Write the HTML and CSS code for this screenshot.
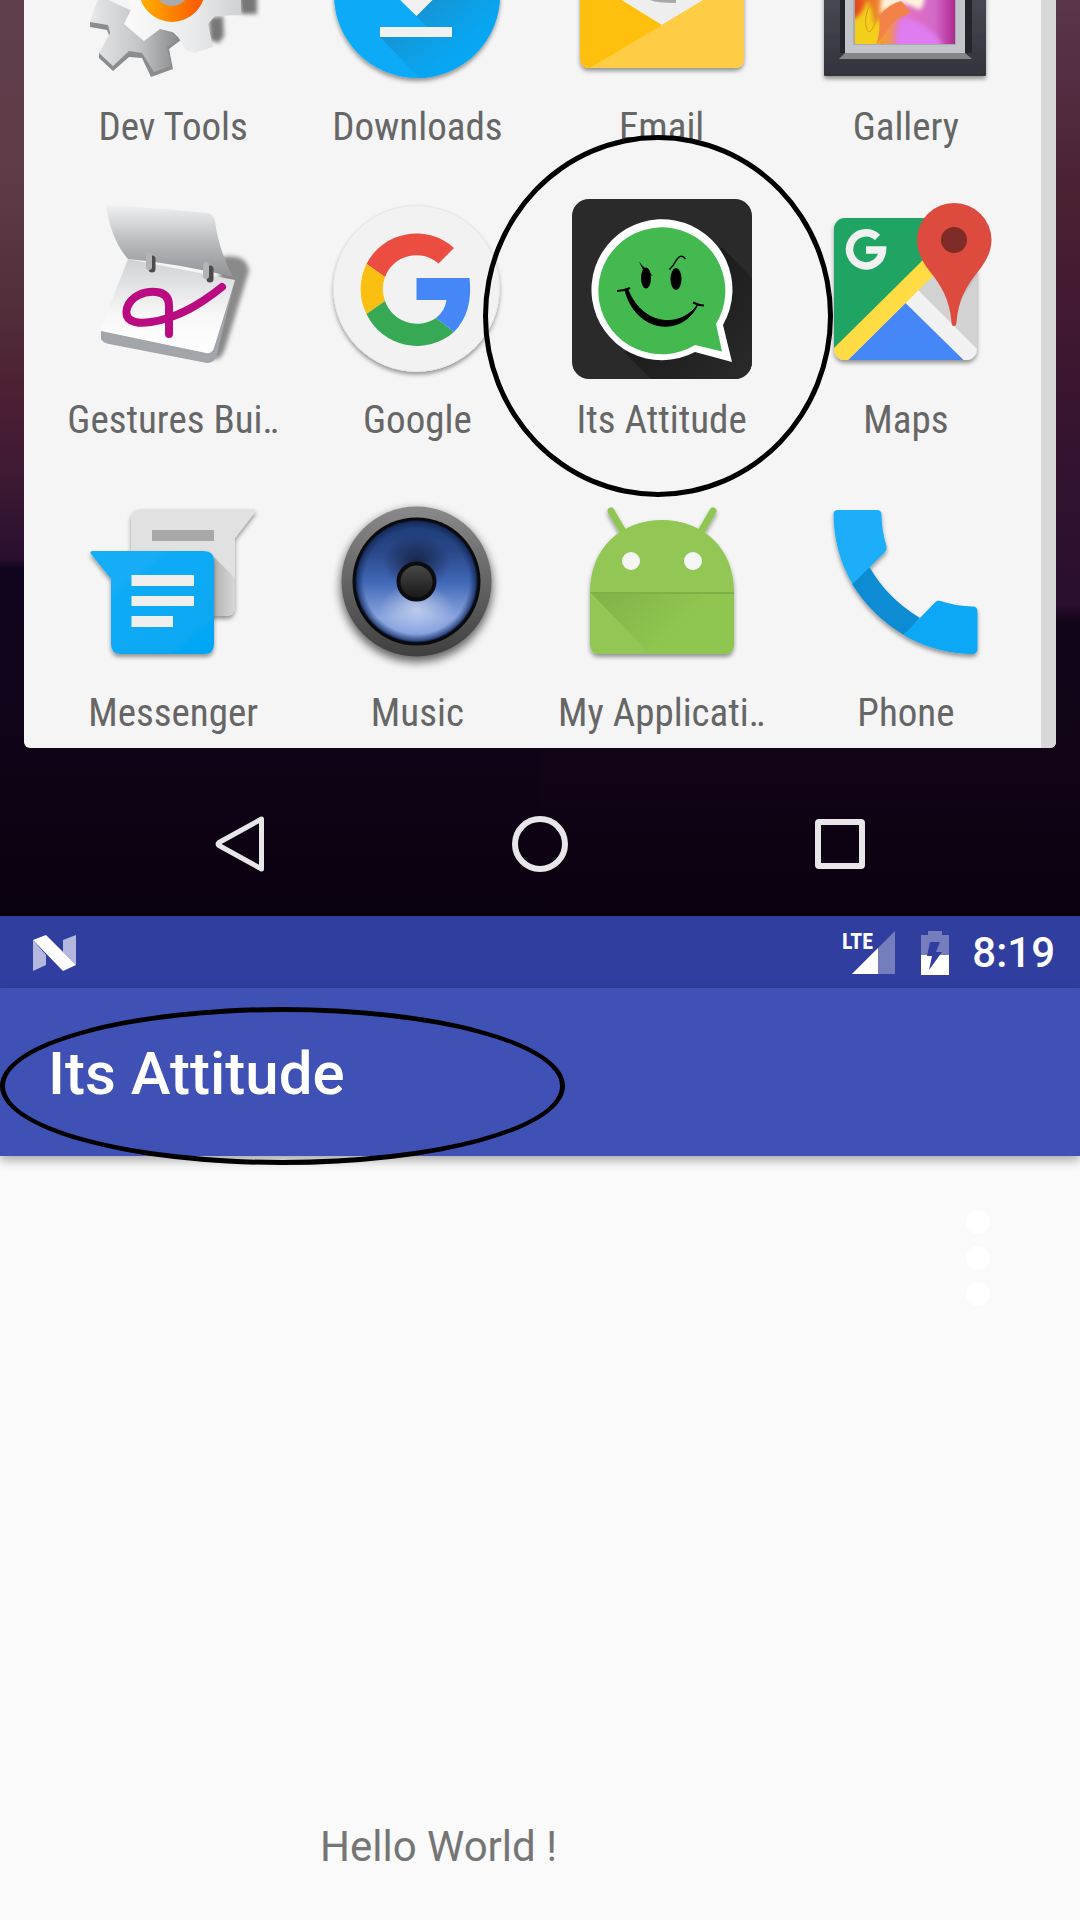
FILE: index.html
```html
<!DOCTYPE html>
<html lang="en">
<head>
<meta charset="utf-8">
<meta name="viewport" content="width=device-width, initial-scale=1">
<title>Its Attitude</title>
<link rel="stylesheet" href="styles.css">
</head>
<body>
<section class="launcher">
  <div class="drawer">
    <ul class="apps">
      <li class="app"><button class="app-button" type="button">
        <svg class="app-icon cut" viewBox="0 0 180 86" aria-hidden="true">
          <defs>
            <linearGradient id="gearBack" x1="0" y1="0" x2="1" y2="0"><stop offset="0" stop-color="#e6e8ea"/><stop offset=".55" stop-color="#c4c5c7"/><stop offset="1" stop-color="#88898b"/></linearGradient>
            <linearGradient id="gearFront" x1="0" y1="0" x2="1" y2="0"><stop offset="0" stop-color="#fbfbfb"/><stop offset=".6" stop-color="#e8eaeb"/><stop offset="1" stop-color="#cfd1d3"/></linearGradient>
            <linearGradient id="gearRing" x1="0" y1="0" x2="1" y2="0"><stop offset="0" stop-color="#ffa800"/><stop offset="1" stop-color="#fb5e00"/></linearGradient>
            <filter id="soft" x="-30%" y="-30%" width="160%" height="160%"><feGaussianBlur stdDeviation="2"/></filter>
            <filter id="drop" x="-20%" y="-20%" width="140%" height="150%"><feDropShadow dx="0" dy="3" stdDeviation="2" flood-opacity=".4"/></filter>
          </defs>
          <path d="M156-4h18v18h-16zM126 18l14-2 1 20-5 7-9-3z" fill="#777" filter="url(#soft)"/>
          <path d="M7 22v5l17 3 3 8-11 15v5l14 13 16-14 13 1 9 19 22-8-4-20 12-9-12-12-50-20z" fill="#8b8c8e"/>
          <path d="M17-4L12 7 7 22l18 3 2 8-11 20 14 13 16-15 13 2 12 19 17-6-4-19 12-8-9-9-10-6z" fill="url(#gearBack)"/>
          <path d="M45-4l4 12-8 16 20 17 16-12 16 4 10 17 8 3 19-6-5-23 7-8 26-1V-4z" fill="url(#gearFront)"/>
          <circle cx="89" cy="-11" r="25" fill="#a9abad"/>
          <circle cx="89" cy="-11" r="25" fill="none" stroke="url(#gearRing)" stroke-width="16"/>
        </svg><span class="app-name">Dev Tools</span></button></li>
      <li class="app"><button class="app-button" type="button">
        <svg class="app-icon cut" viewBox="0 0 180 86" aria-hidden="true">
          <defs>
            <linearGradient id="blue" x1="0" y1="0" x2="1" y2="1"><stop offset="0" stop-color="#18aef8"/><stop offset="1" stop-color="#03a6f3"/></linearGradient>
            <linearGradient id="dlShade" gradientUnits="userSpaceOnUse" x1="70" y1="24" x2="110" y2="74"><stop offset="0" stop-color="#1594d3"/><stop offset=".5" stop-color="#0d9fe5"/><stop offset="1" stop-color="#07a7f4"/></linearGradient>
            <clipPath id="dlClip"><circle cx="90" cy="-5" r="83"/></clipPath>
          </defs>
          <circle cx="90" cy="-5" r="83" fill="#10abf7" filter="url(#drop)"/>
          <path d="M53 37L98 84l90-20V-4h-82L89 16l11 11z" fill="url(#dlShade)" clip-path="url(#dlClip)"/>
          <path d="M69-4L89.500 16l20-20zM53 27h72v10H53z" fill="#f1f1f1"/>
        </svg><span class="app-name">Downloads</span></button></li>
      <li class="app"><button class="app-button" type="button">
        <svg class="app-icon cut" viewBox="0 0 180 86" aria-hidden="true">
          <path d="M8-10h164v68q0 10-10 10H18Q8 68 8 58z" fill="#ffc010" filter="url(#drop)"/>
          <path d="M43-4l47 29 48-29z" fill="#eee"/>
          <path d="M78 0q6 3 26 3V0z" fill="#a8a8a8"/>
          <path d="M18 68L90 25l48-29h34v62q0 10-10 10z" fill="#ffcd45"/>
        </svg><span class="app-name">Email</span></button></li>
      <li class="app"><button class="app-button" type="button">
        <svg class="app-icon cut" viewBox="0 0 180 86" aria-hidden="true">
          <defs>
            <linearGradient id="photo" x1="0" y1="0" x2="1" y2="0"><stop offset="0" stop-color="#e5451c"/><stop offset=".3" stop-color="#f39a3a"/><stop offset=".5" stop-color="#e474c4"/><stop offset=".8" stop-color="#d368c8"/><stop offset="1" stop-color="#ae2a90"/></linearGradient>
            <linearGradient id="frame" x1="0" y1="0" x2="0" y2="1"><stop offset="0" stop-color="#4a4a55"/><stop offset="1" stop-color="#33333c"/></linearGradient>
            <clipPath id="photoClip"><path d="M39-4h100v48H39z"/></clipPath>
          </defs>
          <rect x="8" y="-10" width="162" height="86" rx="1" fill="url(#frame)" filter="url(#drop)"/>
          <path d="M24-4h132v57H24z" fill="#25252c"/>
          <path d="M29 53h120l7 6H23z" fill="#85868a"/>
          <path d="M29-4h120v57H29z" fill="#c3c3ca"/>
          <path d="M37-4h103v49H37z" fill="#a9a9b2"/>
          <path d="M39-4h100v48H39z" fill="url(#photo)"/>
          <g clip-path="url(#photoClip)">
            <g filter="url(#soft)">
              <path d="M35 50V20q12-4 16-20 8 12 6 24l8-6q4 16-6 32z" fill="#f3cf1a"/>
              <path d="M80 50q-2-28 8-32 30 6 40 32z" fill="#df7cef"/>
              <path d="M66-4h42q2 6-4 14Q92 4 86 3 72 6 64 14z" fill="#fff3df"/>
            </g>
            <path d="M63 16q10-12 22-15 6 6 10 12-14 4-20 12-6 10-14 19 4-16 2-28z" fill="#f28248"/>
            <path d="M54 4q10 10 4 22t-8 0q-2-8 4-22z" fill="none" stroke="#d99a10" stroke-width="1"/>
          </g>
        </svg><span class="app-name">Gallery</span></button></li>

      <li class="app"><button class="app-button" type="button">
        <svg class="app-icon" viewBox="0 0 180 180" aria-hidden="true">
          <defs>
            <linearGradient id="lid" x1="0" y1="0" x2="0" y2="1"><stop offset="0" stop-color="#eff1f1"/><stop offset=".55" stop-color="#b5b7ba"/><stop offset="1" stop-color="#929396"/></linearGradient>
            <linearGradient id="pad" x1="0" y1="0" x2="0" y2="1"><stop offset="0" stop-color="#cfd1d3"/><stop offset=".6" stop-color="#f8f8f8"/><stop offset="1" stop-color="#fff"/></linearGradient>
          </defs>
          <path d="M138 58q26-4 28 14l-24 78q-4 12-12 10z" fill="#6f6f6f" opacity=".8" filter="url(#soft)"/>
          <path d="M18 131v9q2 4 8 5l98 19q6 0 9-5l19-78z" fill="#a2a5a9"/>
          <path d="M45 60l107 21-21 68q-2 6-8 5l-105-22q0-5 3-11z" fill="url(#pad)"/>
          <path d="M23 6q50 3 102 8 5 1 7 8 4 30 18 56Q98 65 45 60 28 41 23 6z" fill="url(#lid)"/>
          <path d="M69 60v10M127 70v10" stroke="#4b4b4b" stroke-width="7" stroke-linecap="round"/>
          <path d="M66 56v12M123 66v11" stroke="#b4b4b4" stroke-width="6" stroke-linecap="round"/>
          <path d="M139 88C119 104 96 119 68 123 49 126 41 120 44 109 48 97 61 92 73 93q13 1 13 14v28" fill="none" stroke="#ba0b81" stroke-width="8" stroke-linecap="round" stroke-linejoin="round"/>
        </svg><span class="app-name">Gestures Bui‥</span></button></li>
      <li class="app"><button class="app-button" type="button">
        <svg class="app-icon" viewBox="0 0 180 180" aria-hidden="true">
          <circle cx="89.500" cy="89.500" r="83" fill="#f2f2f2" filter="url(#drop)"/>
          <circle cx="89.500" cy="89.500" r="83" fill="#f2f2f2" stroke="#e6e6e6" stroke-width="1"/>
          <path d="M39.500 65A56 56 0 0 1 127 49l-15.500 15.500A33.500 33.500 0 0 0 58 78z" fill="#eb4d40"/>
          <path d="M39.500 65a56 56 0 0 0 0 50L58 102a34 34 0 0 1 0-24z" fill="#fbbf12"/>
          <path d="M39.500 115A56 56 0 0 0 127 133l-18-14A34 34 0 0 1 58 102z" fill="#37a955"/>
          <path d="M89.500 79h53q4 34-15.500 54l-18-14q9-7 10.500-18h-30z" fill="#4587f6"/>
        </svg><span class="app-name">Google</span></button></li>
      <li class="app marked"><button class="app-button" type="button">
        <svg class="app-icon" viewBox="0 0 180 180" aria-hidden="true">
          <defs>
            <linearGradient id="longShade" x1="0" y1="0" x2="1" y2="1"><stop offset=".3" stop-color="#1a1a1a"/><stop offset="1" stop-color="#2a2a2a"/></linearGradient>
            <clipPath id="tile"><rect width="180" height="180" rx="17"/></clipPath>
          </defs>
          <rect width="180" height="180" rx="17" fill="#2a2a2a"/>
          <path d="M150 48l30 31v101H79l-26-26z" fill="url(#longShade)" clip-path="url(#tile)"/>
          <path d="M160 163l-37-10A70.500 70.500 0 1 1 151 126z" fill="#fff"/>
          <path d="M150 152.500L123 146A63.500 63.500 0 1 1 144 125z" fill="#44b94f"/>
          <ellipse cx="74" cy="79" rx="5" ry="10.500"/><ellipse cx="104" cy="80" rx="5.500" ry="11"/>
          <path d="M67 62.500q4 5 6 6.500l8 8-9-4z"/>
          <path d="M97.500 70.500q4-4 6-8 5-9 10-2.500" fill="none" stroke="#000" stroke-width="1.500"/>
          <path d="M53 91C64 135 112 138 126 105 110 129 72 129 56 91z" stroke="#000" stroke-width="1"/>
          <path d="M45 92q7 0 13-3M121 103.500q6 3 11 3" fill="none" stroke="#000" stroke-width="2"/>
        </svg><span class="app-name">Its Attitude</span></button></li>
      <li class="app"><button class="app-button" type="button">
        <svg class="app-icon" viewBox="0 0 180 180" aria-hidden="true">
          <defs><clipPath id="mapClip"><rect x="18" y="19" width="143" height="142" rx="11"/></clipPath></defs>
          <rect x="18" y="19" width="143" height="142" rx="11" fill="#ddd" filter="url(#drop)"/>
          <g clip-path="url(#mapClip)">
            <path d="M18 19h143v142H18z" fill="#d2d2d2"/>
            <path d="M18 19h132L18 151z" fill="#1fa463"/>
            <path d="M102 91l60 60v10h-15L89 104z" fill="#f1f1f1"/>
            <path d="M32 161l57.500-57 58 57z" fill="#4587f6"/>
            <path d="M18 149l92-91 11 15-89 88H18z" fill="#ffdc43"/>
            <path d="M138 125l4-20 19-28v-9l-20 8z" fill="#bdbdbd" opacity=".6"/>
          </g>
          <path d="M61.500 38.500A16.500 16.500 0 1 0 66.500 51H50" fill="none" stroke="#f1f1f1" stroke-width="7.500"/>
          <path d="M138 4a37 37 0 0 1 37.500 37c0 12-6 22-13 31-12 15-20 28-22 51q0 4-2.500 4t-2.500-4c-2-23-10-36-22-51-7-9-12.500-19-12.500-31A37 37 0 0 1 138 4z" fill="#dd4b3e"/>
          <circle cx="138" cy="41" r="13" fill="#802b27"/>
        </svg><span class="app-name">Maps</span></button></li>

      <li class="app"><button class="app-button" type="button">
        <svg class="app-icon" viewBox="0 0 180 180" aria-hidden="true">
          <defs><linearGradient id="msgShade" x1="0" y1="0" x2="1" y2="0"><stop offset="0" stop-color="#b5b5b5"/><stop offset="1" stop-color="#d6d6d6"/></linearGradient></defs>
          <path d="M58 17h113q3 0 1 3l-20 26v68q0 10-10 10H48V27q0-10 10-10z" fill="#e1e1e1" filter="url(#drop)"/>
          <path d="M131 65l21 21v28q0 10-10 10h-11z" fill="url(#msgShade)"/>
          <path d="M69 38h62v11H69z" fill="#a8a8a8"/>
          <path d="M10 59h111q10 0 10 10v83q0 10-10 10H38q-10 0-10-10V87L8 62q-2-3 2-3z" fill="url(#blue)" filter="url(#drop)"/>
          <path d="M48.500 83h62.500v11H48.500zM48.500 104h62.500v10H48.500zM48.500 124H90v11H48.500z" fill="#efefef"/>
        </svg><span class="app-name">Messenger</span></button></li>
      <li class="app"><button class="app-button" type="button">
        <svg class="app-icon" viewBox="0 0 180 180" aria-hidden="true">
          <defs>
            <linearGradient id="rim" x1="0" y1="0" x2="0" y2="1"><stop offset="0" stop-color="#8a8a8a"/><stop offset="1" stop-color="#3f3f3f"/></linearGradient>
            <linearGradient id="cone" x1="0" y1="0" x2="0" y2="1"><stop offset="0" stop-color="#1d3b75"/><stop offset=".25" stop-color="#2a4788"/><stop offset=".5" stop-color="#4067b6"/><stop offset=".8" stop-color="#8aa5df"/><stop offset="1" stop-color="#7f9ddd"/></linearGradient>
            <radialGradient id="glow"><stop offset="0" stop-color="#c4d1ee" stop-opacity=".9"/><stop offset="1" stop-color="#c4d1ee" stop-opacity="0"/></radialGradient>
            <radialGradient id="dark"><stop offset="0" stop-color="#14203f" stop-opacity=".9"/><stop offset="1" stop-color="#14203f" stop-opacity="0"/></radialGradient>
            <radialGradient id="edge"><stop offset=".86" stop-color="#16306a" stop-opacity="0"/><stop offset="1" stop-color="#10244f" stop-opacity=".9"/></radialGradient>
            <linearGradient id="cap" x1="0" y1="0" x2="0" y2="1"><stop offset="0" stop-color="#4a4a4a"/><stop offset="1" stop-color="#161616"/></linearGradient>
            <filter id="halo" x="-20%" y="-20%" width="140%" height="140%"><feGaussianBlur stdDeviation="5"/></filter>
          </defs>
          <circle cx="89.500" cy="94" r="76" fill="#000" opacity=".6" filter="url(#halo)"/>
          <circle cx="89.500" cy="89.500" r="75" fill="url(#rim)"/>
          <circle cx="89.500" cy="89.500" r="64" fill="#0a0a0d"/>
          <circle cx="89.500" cy="89.500" r="60" fill="url(#cone)"/>
          <ellipse cx="89.500" cy="70" rx="34" ry="26" fill="url(#dark)"/>
          <ellipse cx="89.500" cy="118" rx="38" ry="26" fill="url(#glow)"/>
          <circle cx="89.500" cy="89.500" r="61" fill="url(#edge)"/>
          <circle cx="89.500" cy="89.500" r="18" fill="url(#cap)" stroke="#0d0d10" stroke-width="4"/>
        </svg><span class="app-name">Music</span></button></li>
      <li class="app"><button class="app-button" type="button">
        <svg class="app-icon" viewBox="0 0 180 180" aria-hidden="true">
          <defs><linearGradient id="droidShade" gradientUnits="userSpaceOnUse" x1="40" y1="100" x2="90" y2="150"><stop offset="0" stop-color="#82b549"/><stop offset="1" stop-color="#8ec64f"/></linearGradient></defs>
          <g filter="url(#drop)">
            <path d="M39 19l14 24M141 19l-14 24" stroke="#8fc653" stroke-width="7" stroke-linecap="round"/>
            <path d="M18 100C18 55 50 28 90 28s72 27 72 72v52q0 10-10 10H28q-10 0-10-10z" fill="#92c756"/>
          </g>
          <path d="M18 100h144v52q0 10-10 10H78z" fill="url(#droidShade)"/>
          <path d="M18 100h144v2H20z" fill="#7fb045"/>
          <circle cx="59" cy="69" r="9" fill="#f5f5f5"/><circle cx="121" cy="69" r="9" fill="#f5f5f5"/>
        </svg><span class="app-name">My Applicati‥</span></button></li>
      <li class="app"><button class="app-button" type="button">
        <svg class="app-icon" viewBox="0 0 180 180" aria-hidden="true">
          <g filter="url(#drop)">
            <path d="M36 92l17.500-17Q71 106 104 126l-16 17Q56 124 36 92z" fill="#0f8cd3"/>
            <path d="M22 18h39q4 0 4.500 4 0 16 5 32 1 3-1.500 6L36.500 92Q18 61 17.500 22q0-4 4.500-4z" fill="#1aaef8"/>
            <path d="M87.500 143l32-33q2-2 5-1 15 5 32 5.500 5 0 5 5V157q0 5-6 5-37-1-68-19z" fill="#07a8f5"/>
          </g>
        </svg><span class="app-name">Phone</span></button></li>
    </ul>
    <div class="scrollbar"></div>
  </div>
  <nav class="nav-keys">
    <button class="nav-key" type="button" aria-label="Back"><svg width="60" height="60" viewBox="0 0 60 60"><path d="M51.500 5v50L9 31.500q-2-1.500 0-3z" fill="none" stroke="#e8e6e9" stroke-width="5" stroke-linejoin="round"/></svg></button>
    <button class="nav-key" type="button" aria-label="Home"><svg width="60" height="60" viewBox="0 0 60 60"><circle cx="30" cy="30" r="25" fill="none" stroke="#e8e6e9" stroke-width="6"/></svg></button>
    <button class="nav-key" type="button" aria-label="Recent apps"><svg width="60" height="60" viewBox="0 0 60 60"><rect x="8" y="8" width="44" height="44" rx="1" fill="none" stroke="#e8e6e9" stroke-width="6" stroke-linejoin="round"/></svg></button>
  </nav>
</section>

<section class="screen">
  <div class="status-bar">
    <svg class="status-logo" width="44" height="36" viewBox="0 0 44 36" aria-hidden="true"><path d="M0 5l13 15v10L0 36zM30 5l13-5v30L30 17z" fill="#b4b8df"/><path d="M0 5l13-5 30 30-13 6z" fill="#fff"/></svg>
    <svg class="signal" width="54" height="44" viewBox="0 0 54 44" role="img" aria-label="Mobile signal"><path d="M53 0v43H10z" fill="#757dbd"/><path d="M36 17v26H10z" fill="#fff"/><text class="lte" x="0" y="18">LTE</text></svg>
    <svg class="battery" width="28" height="44" viewBox="0 0 28 44" role="img" aria-label="Battery charging"><path d="M7 0h14v4h7v20H0V4h7z" fill="#757dbd"/><path d="M0 24h28v20H0z" fill="#fff"/><path d="M9 11h10l-4 10h6L8 39l3-14H6z" fill="#303f9f"/></svg>
    <time class="clock">8:19</time>
  </div>
  <header class="app-bar"><h1 class="title">Its Attitude</h1></header>
  <main class="content">
    <button class="overflow" type="button" aria-label="More options"><svg width="24" height="98" viewBox="0 0 24 98"><circle cx="12" cy="13" r="12"/><circle cx="12" cy="49" r="12"/><circle cx="12" cy="85" r="12"/></svg></button>
    <p class="greeting">Hello World !</p>
  </main>
</section>
</body>
</html>
```

FILE: styles.css
```css
*,
*::after {
  box-sizing: border-box;
}

body {
  display: flex;
  flex-direction: column;
  min-height: 100vh;
  margin: 0;
  background: #fafafa;
  font-family: Roboto, "Liberation Sans", sans-serif;
}

button {
  padding: 0;
  border: 0;
  background: none;
  font: inherit;
  color: inherit;
}

svg {
  display: block;
}

/* Home screen with the app drawer; the wallpaper's horizon is higher on the left */

.launcher {
  padding: 0 24px;
  background:
    linear-gradient(#5f3f4c 0, #5e3c48 18%, #52303b 32%, #4c1e33 44%, #3d1a33 52%, #290f2e 61%, #10051d 62%, #0f0417 82%, #0a010f 100%) left / 50% 100% no-repeat,
    linear-gradient(#59364a 0, #4a2033 22%, #431a31 32%, #34132f 48%, #2a0f2e 66%, #0f0418 68%, #110417 82%, #0a010f 100%);
}

.drawer {
  display: flex;
  border-radius: 0 0 6px 6px;
  background: #f5f5f5;
}

.apps {
  display: grid;
  flex: 1;
  grid-template-columns: repeat(4, 1fr);
  row-gap: 48px;
  margin: 0;
  padding: 0 13px 11px 27px;
  list-style: none;
}

.scrollbar {
  width: 15px;
  border-radius: 0 0 6px 0;
  background: #d8d8d8;
}

.app {
  position: relative;
}

.app-button {
  display: flex;
  flex-direction: column;
  align-items: center;
  gap: 17px;
  width: 100%;
}

.app-icon {
  width: 180px;
  height: 180px;
  overflow: visible;
}

.app-icon.cut {
  height: 86px;
}

.app-name {
  color: #666;
  font-family: "Roboto Condensed", "Liberation Sans Narrow", Roboto, sans-serif;
  font-size: 39px;
  line-height: 48px;
  white-space: nowrap;
}

.marked::after {
  content: "";
  position: absolute;
  z-index: 1;
  top: -64px;
  left: -57px;
  width: 350px;
  height: 362px;
  border: 5px solid #000;
  border-radius: 50%;
  pointer-events: none;
}

.nav-keys {
  display: flex;
  justify-content: center;
  gap: 240px;
  padding: 66px 0 42px;
}

/* Running app */

.screen {
  display: flex;
  flex: 1;
  flex-direction: column;
}

.status-bar {
  display: flex;
  align-items: center;
  padding: 12px 25px 10px 33px;
  background: #303f9f;
  color: #fff;
}

.status-logo {
  margin-right: auto;
}

.signal {
  overflow: visible;
}

.lte {
  fill: #fff;
  font: 700 22px "Roboto Condensed", "Liberation Sans Narrow", Roboto, sans-serif;
}

.battery {
  margin: 0 23px 0 25px;
}

.clock {
  font-size: 42px;
  font-weight: 500;
  line-height: 50px;
}

.app-bar {
  position: relative;
  z-index: 1;
  padding: 50px 48px 46px;
  background: #3f51b5;
  box-shadow: 0 4px 10px rgba(0, 0, 0, 0.35);
}

.app-bar::after {
  content: "";
  position: absolute;
  top: 19px;
  left: 0;
  width: 565px;
  height: 158px;
  border: 5px solid #000;
  border-radius: 50%;
}

.title {
  margin: 0;
  color: #fff;
  font-size: 60px;
  font-weight: 500;
  line-height: 72px;
}

.content {
  display: flex;
  flex: 1;
  flex-direction: column;
  justify-content: space-between;
  padding: 53px 90px 48px 320px;
}

.overflow {
  align-self: flex-end;
  fill: #fff;
}

.greeting {
  margin: 0;
  color: #757575;
  font-size: 42px;
  line-height: 50px;
}
```
